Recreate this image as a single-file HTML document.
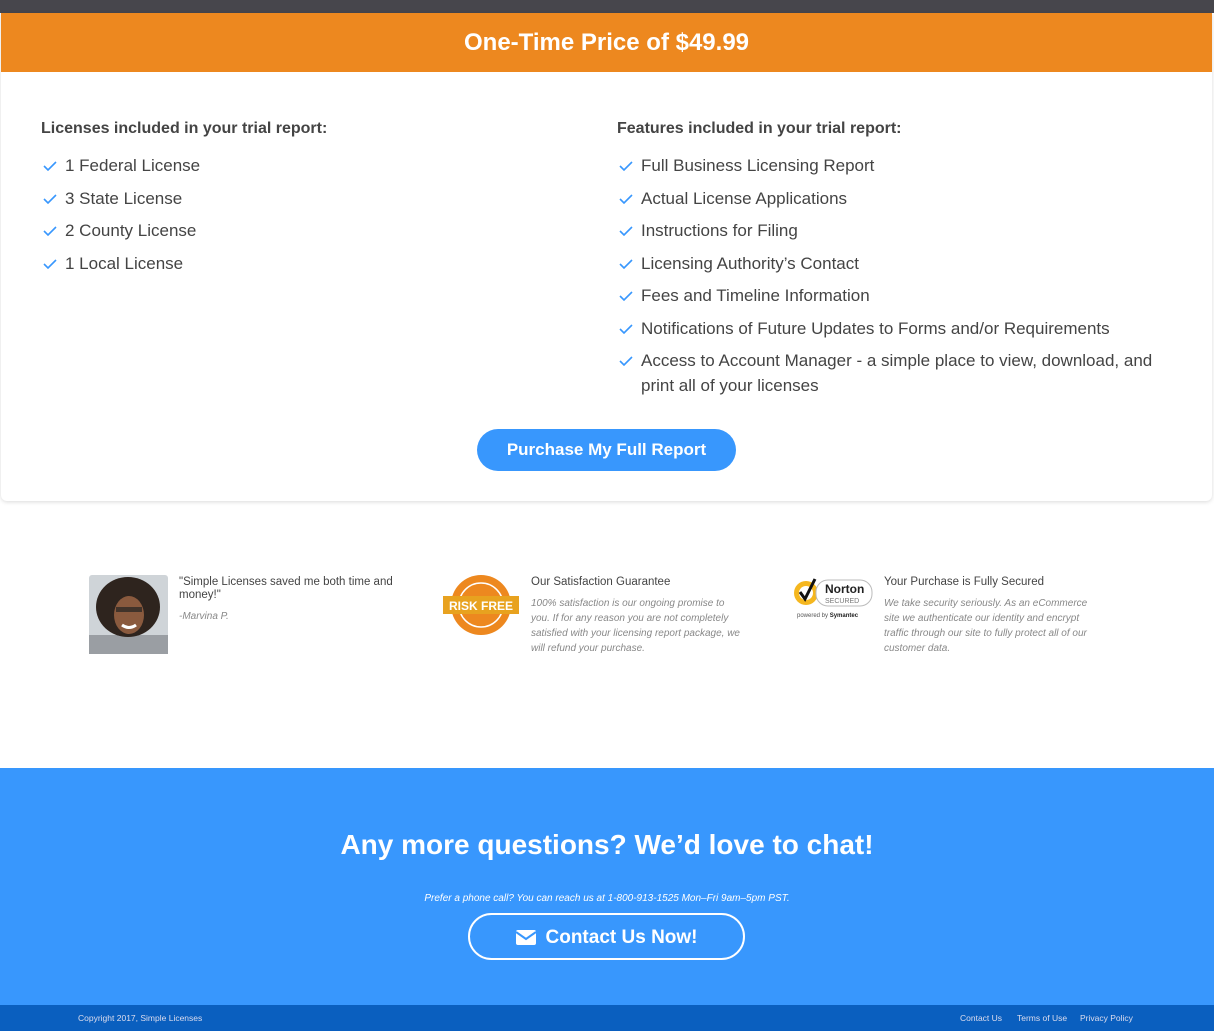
<!DOCTYPE html>
<html><head><meta charset="utf-8"><style>
*{margin:0;padding:0;box-sizing:border-box}
body{width:1214px;height:1031px;background:#fff;font-family:"Liberation Sans",sans-serif;color:#444;position:relative;overflow:hidden}
.top{position:absolute;left:0;top:0;width:1214px;height:13px;background:#47464c}
.card{position:absolute;left:1px;top:13px;width:1211px;height:488px;background:#fff;border-radius:0 0 6px 6px;box-shadow:0 1px 4px rgba(0,0,0,.15)}
.orange{height:59px;background:#ed881f;color:#fff;font-weight:bold;font-size:24px;text-align:center;line-height:60px}
.col{position:absolute;top:107px}
.col h3{font-size:16px;font-weight:bold;color:#444;margin-bottom:15px}
.col li{list-style:none;font-size:17px;line-height:25px;margin-bottom:7.5px;padding-left:24px;position:relative;color:#444}
.col li svg{position:absolute;left:2px;top:8px}
.btn{position:absolute;left:476px;top:416px;width:259px;height:42px;border-radius:21px;background:#3897fd;color:#fff;font-size:17px;font-weight:bold;text-align:center;line-height:42px}
.t{position:absolute;font-size:11.5px;color:#444;line-height:13px}
.i{position:absolute;font-size:10px;font-style:italic;color:#888;line-height:15px}
.blue{position:absolute;left:0;top:768px;width:1214px;height:237px;background:#3897fd;color:#fff;text-align:center}
.blue h2{position:absolute;top:61px;width:100%;font-size:28px;font-weight:bold}
.blue p{position:absolute;top:125px;width:100%;font-size:10px;font-style:italic}
.cbtn{position:absolute;left:468px;top:145px;width:277px;height:47px;border:2px solid #fff;border-radius:24px;font-size:19px;font-weight:bold;line-height:45px}
.foot{position:absolute;left:0;top:1005px;width:1214px;height:26px;background:#0a5fbf;color:#dde;font-size:8.5px;line-height:27px}
</style></head><body>
<div class="top"></div>
<div class="card">
<div class="orange">One-Time Price of $49.99</div>
<div class="col" style="left:40px"><h3>Licenses included in your trial report:</h3><ul>
<li><svg width="14" height="10"><path d="M1 5l4 4 8-8" stroke="#3897fd" stroke-width="1.6" fill="none"/></svg>1 Federal License</li>
<li><svg width="14" height="10"><path d="M1 5l4 4 8-8" stroke="#3897fd" stroke-width="1.6" fill="none"/></svg>3 State License</li>
<li><svg width="14" height="10"><path d="M1 5l4 4 8-8" stroke="#3897fd" stroke-width="1.6" fill="none"/></svg>2 County License</li>
<li><svg width="14" height="10"><path d="M1 5l4 4 8-8" stroke="#3897fd" stroke-width="1.6" fill="none"/></svg>1 Local License</li></ul></div>
<div class="col" style="left:616px;width:560px"><h3>Features included in your trial report:</h3><ul>
<li><svg width="14" height="10"><path d="M1 5l4 4 8-8" stroke="#3897fd" stroke-width="1.6" fill="none"/></svg>Full Business Licensing Report</li>
<li><svg width="14" height="10"><path d="M1 5l4 4 8-8" stroke="#3897fd" stroke-width="1.6" fill="none"/></svg>Actual License Applications</li>
<li><svg width="14" height="10"><path d="M1 5l4 4 8-8" stroke="#3897fd" stroke-width="1.6" fill="none"/></svg>Instructions for Filing</li>
<li><svg width="14" height="10"><path d="M1 5l4 4 8-8" stroke="#3897fd" stroke-width="1.6" fill="none"/></svg>Licensing Authority’s Contact</li>
<li><svg width="14" height="10"><path d="M1 5l4 4 8-8" stroke="#3897fd" stroke-width="1.6" fill="none"/></svg>Fees and Timeline Information</li>
<li><svg width="14" height="10"><path d="M1 5l4 4 8-8" stroke="#3897fd" stroke-width="1.6" fill="none"/></svg>Notifications of Future Updates to Forms and/or Requirements</li>
<li><svg width="14" height="10"><path d="M1 5l4 4 8-8" stroke="#3897fd" stroke-width="1.6" fill="none"/></svg>Access to Account Manager - a simple place to view, download, and print all of your licenses</li></ul></div>
<div class="btn">Purchase My Full Report</div>
</div>

<svg style="position:absolute;left:89px;top:575px" width="79" height="79"><rect width="79" height="79" rx="3" fill="#cfd4d8"/><rect y="60" width="79" height="19" fill="#9a9ea3"/><ellipse cx="39" cy="32" rx="32" ry="30" fill="#2e241e"/><ellipse cx="40" cy="40" rx="15" ry="19" fill="#8a5a3e"/><rect x="27" y="32" width="26" height="5" fill="#222" opacity=".7"/><path d="M33 50q7 5 14 0" stroke="#fff" stroke-width="3" fill="none"/></svg>
<div class="t" style="left:179px;top:576px;width:230px">"Simple Licenses saved me both time and money!"</div>
<div class="i" style="left:179px;top:609px">-Marvina P.</div>

<svg style="position:absolute;left:442px;top:574px" width="78" height="62" viewBox="0 0 78 62"><circle cx="39" cy="31" r="30" fill="#ed881f"/><circle cx="39" cy="31" r="22" fill="none" stroke="#fff" stroke-width="1.5"/><rect x="1" y="22" width="76" height="18" fill="#e8a21f"/><text x="39" y="36" fill="#fff" font-size="12" font-weight="bold" text-anchor="middle" font-family="Liberation Sans">RISK FREE</text></svg>
<div class="t" style="left:531px;top:576px">Our Satisfaction Guarantee</div>
<div class="i" style="left:531px;top:596px;width:215px">100% satisfaction is our ongoing promise to you. If for any reason you are not completely satisfied with your licensing report package, we will refund your purchase.</div>

<svg style="position:absolute;left:792px;top:574px" width="84" height="46"><circle cx="14" cy="19" r="12" fill="#f5b71f"/><circle cx="14" cy="19" r="7" fill="#fff"/><path d="M8 18l5 7 10-20" stroke="#111" stroke-width="3" fill="none"/><rect x="24" y="6" width="56" height="26" rx="12" fill="#fff" stroke="#bbb"/><text x="33" y="19" font-size="12" font-weight="bold" fill="#222" font-family="Liberation Sans">Norton</text><text x="33" y="29" font-size="7" fill="#777" font-family="Liberation Sans">SECURED</text><text x="5" y="43" font-size="6" fill="#555" font-family="Liberation Sans">powered by <tspan font-weight="bold" fill="#222">Symantec</tspan></text></svg>
<div class="t" style="left:884px;top:576px">Your Purchase is Fully Secured</div>
<div class="i" style="left:884px;top:596px;width:215px">We take security seriously. As an eCommerce site we authenticate our identity and encrypt traffic through our site to fully protect all of our customer data.</div>

<div class="blue">
<h2>Any more questions? We’d love to chat!</h2>
<p>Prefer a phone call? You can reach us at 1-800-913-1525 Mon–Fri 9am–5pm PST.</p>
<div class="cbtn"><svg width="20" height="16" style="vertical-align:-2px;margin-right:10px"><rect x="0" y="1" width="20" height="15" rx="2" fill="#fff"/><path d="M0 3l10 7 10-7" stroke="#3897fd" stroke-width="2" fill="none"/></svg>Contact Us Now!</div>
</div>
<div class="foot"><span style="position:absolute;left:78px">Copyright 2017, Simple Licenses</span><span style="position:absolute;left:960px">Contact Us</span><span style="position:absolute;left:1017px">Terms of Use</span><span style="position:absolute;left:1080px">Privacy Policy</span></div>
</body></html>
